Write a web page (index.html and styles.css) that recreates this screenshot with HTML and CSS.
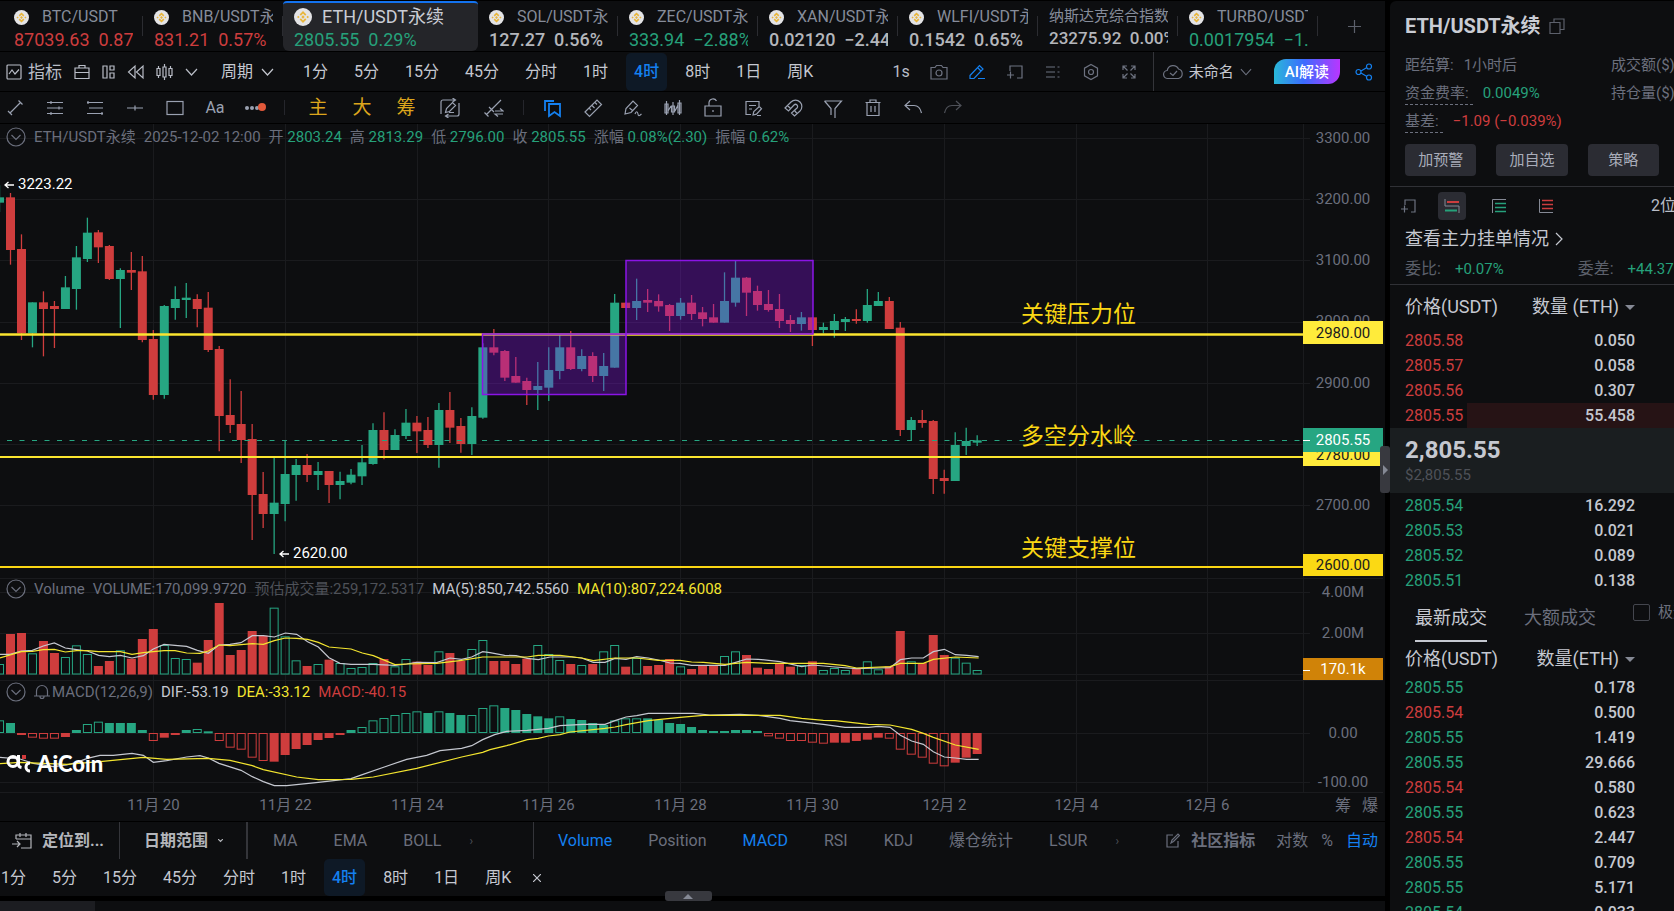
FILE: index.html
```html
<!DOCTYPE html>
<html lang="zh-CN">
<head>
    <meta charset="UTF-8">
    <meta name="viewport" content="width=device-width, initial-scale=1.0">
    <title>ETH/USDT永续 - AiCoin</title>
    <link rel="stylesheet" href="styles.css">
</head>
<body>
    <svg class="defs" width="0" height="0">
        <symbol id="coin" viewBox="0 0 18 18">
            <circle cx="9" cy="9" r="9" fill="#e4e4e6"/>
            <g fill="#e8b53a">
                <path d="M9 3l3.4 3.4-1.3 1.3L9 5.6 6.900 7.700 5.600 6.400z"/>
                <path d="M9 15l3.400-3.400-1.300-1.300L9 12.400l-2.100-2.100-1.300 1.300z"/>
                <path d="M9 7.300L10.700 9 9 10.700 7.300 9z"/>
                <path d="M4.300 7.700L5.600 9l-1.300 1.300L3 9zM13.700 7.700L15 9l-1.300 1.300L12.400 9z"/>
            </g>
        </symbol>
        <symbol id="chev" viewBox="0 0 13 8"><path d="M1 1l5.500 6L12 1"/></symbol>
        <symbol id="fold" viewBox="0 0 20 20"><circle cx="10" cy="10" r="9"/><path d="M5.500 8l4.500 4.500L14.500 8"/></symbol>
    </svg>

    <main class="main">
        <nav class="tabs">
            <button class="tab red"><span class="name"><svg><use href="#coin"/></svg>BTC/USDT</span><span class="price">87039.63&nbsp; 0.87%</span></button>
            <button class="tab red"><span class="name"><svg><use href="#coin"/></svg>BNB/USDT永续</span><span class="price">831.21&nbsp; 0.57%</span></button>
            <button class="tab green active"><span class="name"><svg><use href="#coin"/></svg>ETH/USDT永续</span><span class="price">2805.55&nbsp; 0.29%</span></button>
            <button class="tab flat"><span class="name"><svg><use href="#coin"/></svg>SOL/USDT永续</span><span class="price">127.27&nbsp; 0.56%</span></button>
            <button class="tab green"><span class="name"><svg><use href="#coin"/></svg>ZEC/USDT永续</span><span class="price">333.94&nbsp; −2.88%</span></button>
            <button class="tab flat"><span class="name"><svg><use href="#coin"/></svg>XAN/USDT永续</span><span class="price">0.02120&nbsp; −2.44%</span></button>
            <button class="tab flat"><span class="name"><svg><use href="#coin"/></svg>WLFI/USDT永续</span><span class="price">0.1542&nbsp; 0.65%</span></button>
            <button class="tab flat index"><span class="name">纳斯达克综合指数</span><span class="price">23275.92&nbsp; 0.00%</span></button>
            <button class="tab green"><span class="name"><svg><use href="#coin"/></svg>TURBO/USDT永续</span><span class="price">0.0017954&nbsp; −1.95%</span></button>
            <button class="add-tab" aria-label="add"><svg class="ico" width="13" height="13" viewBox="0 0 13 13"><path d="M6.500 0v13M0 6.500h13"/></svg></button>
        </nav>

        <div class="toolbar">
            <div class="tool-left">
                <button class="with-icon"><svg class="ico" width="16" height="16" viewBox="0 0 16 16"><rect x="1" y="1" width="14" height="14" rx="1"/><path d="M3 10l3-4 3 4 4-4.500"/></svg>指标</button>
                <button><svg class="ico" width="16" height="16" viewBox="0 0 16 16"><path d="M1 4h14v10.500H1zM1 8.500h14M5 4V1.500h6V4"/></svg></button>
                <button><svg class="ico" width="13" height="16" viewBox="0 0 13 16"><path d="M1 2h4v12H1zM8 2h4v4H8zM8 9h4v5H8z"/></svg></button>
                <button><svg class="ico" width="17" height="16" viewBox="0 0 17 16"><path d="M8 2v12L1.500 8zM16 2v12L9.500 8z"/></svg></button>
                <button><svg class="ico" width="17" height="16" viewBox="0 0 17 16"><path d="M1 4.500h3v7H1zM7 3h3v10H7zM13 4.500h3v7h-3zM2.500 2v2.500M2.500 11.500V14M8.500 0v3M8.500 13v3M14.500 2v2.500M14.500 11.500V14"/></svg></button>
                <button><svg class="ico" width="13" height="8"><use href="#chev"/></svg></button>
            </div>
            <div class="periods">
                <button class="pick">周期<svg class="ico" width="13" height="8"><use href="#chev"/></svg></button>
                <button>1分</button>
                <button>5分</button>
                <button>15分</button>
                <button>45分</button>
                <button>分时</button>
                <button>1时</button>
                <button class="on">4时</button>
                <button>8时</button>
                <button>1日</button>
                <button>周K</button>
            </div>
            <div class="tool-right">
                <button>1s</button>
                <button><svg class="ico" width="18" height="18" viewBox="0 0 18 18"><path d="M1 4.500h4l1.500-2h5l1.500 2h4V16H1z"/><circle cx="9" cy="10" r="3"/></svg></button>
                <button><svg class="ico blue" width="18" height="18" viewBox="0 0 18 18"><path d="M2 12.500L11.500 2.500l3.500 3.500L6 15.500H2zM9.500 4.500L13 8M10 15.500h7"/></svg></button>
                <button><svg class="ico" width="18" height="18" viewBox="0 0 18 18"><path d="M4 8V3h12v12h-5M1 12h7M4.500 8.500v7"/></svg></button>
                <button><svg class="ico" width="18" height="18" viewBox="0 0 18 18"><path d="M2 4h9M2 9h9M2 14h9M13.500 4h2M13.500 9h2M13.500 14h2"/></svg></button>
                <button><svg class="ico" width="18" height="18" viewBox="0 0 18 18"><path d="M9 1.500l6.500 3.700v7.600L9 16.500l-6.500-3.700V5.200z"/><circle cx="9" cy="9" r="2.500"/></svg></button>
                <button><svg class="ico" width="18" height="18" viewBox="0 0 18 18"><path d="M3 7V3h4M3 3l4.500 4.500M11 3h4v4M15 3l-4.500 4.500M3 11v4h4M3 15l4.500-4.500M15 11v4h-4M15 15l-4.500-4.500"/></svg></button>
            </div>
            <div class="layout-box">
                <button class="cloud"><svg class="ico" width="20" height="16" viewBox="0 0 20 16"><path d="M5 14.500a4 4 0 0 1-.8-8A6 6 0 0 1 15.500 5a4.900 4.900 0 0 1 0 9.500zM7 9l3 2.500L14 7"/></svg>未命名<svg class="ico" width="12" height="8"><use href="#chev"/></svg></button>
                <button class="ai">AI解读</button>
                <button><svg class="ico blue" width="18" height="18" viewBox="0 0 18 18"><circle cx="3.500" cy="9" r="2.500"/><circle cx="14" cy="3.500" r="2.500"/><circle cx="14" cy="14.500" r="2.500"/><path d="M6 8l5.500-3.200M6 10l5.500 3.200"/></svg></button>
            </div>
        </div>

        <div class="toolbar draw">
            <div class="draw-group">
                <button><svg class="ico" width="20" height="20" viewBox="0 0 20 20"><path d="M5 15L15.500 4.500M3 13l4 4M13.500 2.500l4 4"/></svg></button>
                <button><svg class="ico" width="20" height="20" viewBox="0 0 20 20"><path d="M2 4.500h16M2 10h16M2 15.500h16M6 3v3M14 8.500v3M6 14v3"/></svg></button>
                <button><svg class="ico" width="20" height="20" viewBox="0 0 20 20"><path d="M2 4.500h16M4 10h14M2 15.500h16M3 3v3M17 14v3"/></svg></button>
                <button><svg class="ico" width="20" height="20" viewBox="0 0 20 20"><path d="M2 10h16M10 7.500v5"/></svg></button>
                <button><svg class="ico" width="20" height="20" viewBox="0 0 20 20"><rect x="2" y="3.500" width="16" height="13"/></svg></button>
                <button class="aa">Aa</button>
                <button><svg class="dots" width="22" height="20" viewBox="0 0 22 20" fill="#9aa1b1"><circle cx="3" cy="10" r="2"/><circle cx="8" cy="10" r="2"/><circle cx="13" cy="10" r="2"/><circle cx="18" cy="9" r="4" fill="#e2593a"/></svg></button>
            </div>
            <span class="sep"></span>
            <div class="draw-group gold">
                <button>主</button>
                <button>大</button>
                <button>筹</button>
                <button><svg class="ico" width="20" height="20" viewBox="0 0 20 20"><path d="M1 16V4a2 2 0 0 1 2-2h12M12.500 0l3 2-3 2M19 5v11a2 2 0 0 1-2 2H6M8.500 16l-3 2 3 2M5.500 14.500l1-4 6-6 3 3-6 6zM9 14.500h5"/></svg></button>
                <button><svg class="ico" width="20" height="20" viewBox="0 0 20 20"><path d="M2.500 16.500L17 2M.5 14.500l4 4M5 9l5 5M11 13h8l-3-2.500M19 16h-8l3 2.500"/></svg></button>
            </div>
            <span class="sep"></span>
            <div class="draw-group">
                <button><svg class="ico blue bold" width="20" height="20" viewBox="0 0 20 20"><path d="M2 13V3h9M6 6h11v12l-5.500-4L6 18z"/></svg></button>
                <button><svg class="ico" width="20" height="20" viewBox="0 0 20 20"><path d="M2 14L14 2l4.500 4.500L6.500 18.500zM6 10l2 2M9 7.500l2.500 2.500M12 4.500l2 2"/></svg></button>
                <button><svg class="ico" width="20" height="20" viewBox="0 0 20 20"><path d="M2 16l1-5.500L10 3l4.500 4.500L8 14.500zM6.500 10l3 2.500M12 16c1-3 2.500-3 3 0s1.500 1.500 3.500 0"/></svg></button>
                <button><svg class="ico" width="20" height="20" viewBox="0 0 20 20"><path d="M2 6h3v9H2zM8.500 8h3v6h-3zM15 5h3v10h-3zM3.500 3v14M10 4v13M16.500 2v15M5 13l3-5M12 13l3-6"/></svg></button>
                <button><svg class="ico" width="20" height="20" viewBox="0 0 20 20"><path d="M2 8h16v10H2zM6 8V4.500a4 4 0 0 1 7.500-1.500M10 12v2"/></svg></button>
                <button><svg class="ico" width="20" height="20" viewBox="0 0 20 20"><path d="M8 16.500H3v-13h13v5M6 7.500h7M6 11h3M10 17l.8-3.500 5.500-5 2.200 2.200-5 5.500zM14 17.500h4"/></svg></button>
                <button><svg class="ico" width="20" height="20" viewBox="0 0 20 20"><path d="M2 10l6-6a6.200 6.200 0 0 1 9 9l-5.500 5-3-3 5.500-5a2 2 0 0 0-3-3l-5.500 6zM4.500 7.500l3 3M14 15.500l-2.500-3"/></svg></button>
                <button><svg class="ico" width="20" height="20" viewBox="0 0 20 20"><path d="M1.500 3h17L12 10.500V20M1.500 3L8 10.500V17"/></svg></button>
                <button><svg class="ico" width="20" height="20" viewBox="0 0 20 20"><path d="M2.500 4.500h15M7 4.500V2h6v2.500M4 4.500V17.500h12V4.500M8 8v6M12 8v6"/></svg></button>
                <button><svg class="ico" width="20" height="20" viewBox="0 0 20 20"><path d="M7 3L2 7.500 7 12M2 7.500h9c4 0 6.500 3 7.500 7.500"/></svg></button>
                <button><svg class="ico dim" width="20" height="20" viewBox="0 0 20 20"><path d="M13 3l5 4.500L13 12M18 7.500H9C5 7.500 2.500 10.500 1.500 15"/></svg></button>
            </div>
        </div>

        <section class="chart">
            <svg id="plot"></svg>
            <div class="legend ohlc">
                <svg class="ico" width="20" height="20"><use href="#fold"/></svg>
                <span>ETH/USDT永续</span>
                <span>2025-12-02 12:00</span>
                <span>开 <b>2803.24</b></span>
                <span>高 <b>2813.29</b></span>
                <span>低 <b>2796.00</b></span>
                <span>收 <b>2805.55</b></span>
                <span>涨幅 <b>0.08%(2.30)</b></span>
                <span>振幅 <b>0.62%</b></span>
            </div>
            <div class="legend vol">
                <svg class="ico" width="20" height="20"><use href="#fold"/></svg>
                <span>Volume</span>
                <span>VOLUME:170,099.9720</span>
                <span class="dim">预估成交量:259,172.5317</span>
                <span class="white">MA(5):850,742.5560</span>
                <span class="yellow">MA(10):807,224.6008</span>
            </div>
            <div class="legend macd">
                <svg class="ico" width="20" height="20"><use href="#fold"/></svg>
                <span class="bell"><svg class="ico" width="16" height="16" viewBox="0 0 16 16"><path d="M0 12h16M2.500 12V7a5.500 5.500 0 0 1 11 0v5M6 12.500a2 2 0 0 0 4 0"/></svg>MACD(12,26,9)</span>
                <span class="white">DIF:-53.19</span>
                <span class="yellow">DEA:-33.12</span>
                <span class="red">MACD:-40.15</span>
            </div>
            <div class="logo">
                <svg width="25" height="20" viewBox="0 0 25 20"><circle cx="7" cy="7.500" r="5" fill="none" stroke="#fff" stroke-width="3"/><path d="M12.500 1v9.500q0 2.500 3 3" fill="none" stroke="#fff" stroke-width="3"/><path d="M24 9a4 4 0 1 0 0 8" fill="none" stroke="#fff" stroke-width="3"/><rect x="16" y="1" width="4" height="4" fill="#d23a3c"/></svg>
                <span>AiCoin</span>
            </div>
            <button class="side-handle" aria-label="collapse panel"><svg width="5" height="10"><path d="M0 0l5 5-5 5z" fill="#858995"/></svg></button>
        </section>

        <div class="indicators">
            <button class="locate"><svg class="ico" width="20" height="18" viewBox="0 0 20 18"><path d="M4 7V3h15v13H9M4 7h15M8 1v4M14 1v4M0 12h8M5 9l3 3-3 3"/></svg>定位到...</button>
            <button class="range">日期范围<svg class="ico" width="5" height="4" viewBox="0 0 5 4"><path d="M0 0l2.500 2.500L5 0"/></svg></button>
            <div class="main-ind">
                <button>MA</button>
                <button>EMA</button>
                <button>BOLL</button>
                <button class="more">›</button>
            </div>
            <div class="sub-ind">
                <button class="on">Volume</button>
                <button>Position</button>
                <button class="on">MACD</button>
                <button>RSI</button>
                <button>KDJ</button>
                <button>爆仓统计</button>
                <button>LSUR</button>
                <button class="more">›</button>
            </div>
            <div class="scale">
                <button class="community"><svg class="ico" width="14" height="15" viewBox="0 0 14 15"><path d="M7 2H1v12h11V8M5 10l1-3 6-6 1.500 1.500-6 6z"/></svg>社区指标</button>
                <button>对数</button>
                <button>%</button>
                <button class="on">自动</button>
            </div>
        </div>

        <div class="periods bottom">
            <button>1分</button>
            <button>5分</button>
            <button>15分</button>
            <button>45分</button>
            <button>分时</button>
            <button>1时</button>
            <button class="on">4时</button>
            <button>8时</button>
            <button>1日</button>
            <button>周K</button>
            <button class="close" aria-label="close"><svg class="ico" width="8" height="8" viewBox="0 0 8 8"><path d="M0 0l8 8M8 0L0 8"/></svg></button>
        </div>

        <footer class="footer">
            <div class="foot-tab"></div>
            <button class="foot-handle" aria-label="expand"><svg width="10" height="5"><path d="M0 5l5-5 5 5z" fill="#858995"/></svg></button>
        </footer>
    </main>

    <aside class="side">
        <h1>ETH/USDT永续 <svg class="ico" width="16" height="16" viewBox="0 0 16 16"><path d="M1 4.500h10v11H1zM5 4.500V1h10v10.500h-4"/></svg></h1>
        <dl class="info">
            <div><dt>距结算:</dt><dd class="grey">1小时后</dd></div>
            <div><dt class="tip">资金费率:</dt><dd class="green">0.0049%</dd></div>
            <div><dt class="tip">基差:</dt><dd class="red">−1.09 (−0.039%)</dd></div>
        </dl>
        <div class="info-more"><span>成交额($)</span><span>持仓量($)</span></div>
        <div class="actions">
            <button>加预警</button>
            <button>加自选</button>
            <button>策略</button>
        </div>
        <div class="book-tools">
            <button class="add"><svg class="ico" width="16" height="16" viewBox="0 0 16 16"><path d="M4 7V2h10v12h-4M0 11h7M3.500 7.500v7"/></svg></button>
            <button class="on"><svg width="16" height="16" viewBox="0 0 16 16" fill="none"><path d="M1 1v7h14v7" stroke="#858995"/><path d="M3 4h12" stroke="#cd3d3e" stroke-width="2"/><path d="M1 12.500h12" stroke="#26a17b" stroke-width="2"/></svg></button>
            <button><svg width="16" height="16" viewBox="0 0 16 16" fill="none"><path d="M15 1.500H1.500V15" stroke="#858995"/><path d="M4 5.500h11M4 9.500h11M4 13.500h11" stroke="#26a17b" stroke-width="1.500"/></svg></button>
            <button><svg width="16" height="16" viewBox="0 0 16 16" fill="none"><path d="M1.500 1v13.500H15" stroke="#858995"/><path d="M4 2.500h11M4 6.500h11M4 10.500h11" stroke="#cd3d3e" stroke-width="1.500"/></svg></button>
            <span>2位</span>
        </div>
        <a class="big-orders" href="#">查看主力挂单情况 <svg class="ico" width="8" height="14" viewBox="0 0 8 14"><path d="M1 1l6 6-6 6"/></svg></a>
        <div class="ratio"><span>委比:</span><em>+0.07%</em><span class="diff">委差:</span><em>+44.37</em></div>

        <table class="book asks">
            <thead><tr><th>价格(USDT)</th><th>数量 (ETH)<i></i></th></tr></thead>
            <tbody>
                <tr><td class="red">2805.58</td><td>0.050</td></tr>
                <tr><td class="red">2805.57</td><td>0.058</td></tr>
                <tr><td class="red">2805.56</td><td>0.307</td></tr>
                <tr class="depth" style="background-size: 73% 100%"><td class="red">2805.55</td><td>55.458</td></tr>
            </tbody>
        </table>
        <div class="last"><strong>2,805.55</strong><span>$2,805.55</span></div>
        <table class="book">
            <tbody>
                <tr><td class="green">2805.54</td><td>16.292</td></tr>
                <tr><td class="green">2805.53</td><td>0.021</td></tr>
                <tr><td class="green">2805.52</td><td>0.089</td></tr>
                <tr><td class="green">2805.51</td><td>0.138</td></tr>
            </tbody>
        </table>
        <div class="trade-tabs">
            <button class="on">最新成交</button>
            <button>大额成交</button>
            <label><input type="checkbox">极速</label>
        </div>
        <table class="book trades">
            <thead><tr><th>价格(USDT)</th><th>数量(ETH)<i></i></th></tr></thead>
            <tbody>
                <tr><td class="green">2805.55</td><td>0.178</td></tr>
                <tr><td class="red">2805.54</td><td>0.500</td></tr>
                <tr><td class="green">2805.55</td><td>1.419</td></tr>
                <tr><td class="green">2805.55</td><td>29.666</td></tr>
                <tr><td class="red">2805.54</td><td>0.580</td></tr>
                <tr><td class="green">2805.55</td><td>0.623</td></tr>
                <tr><td class="red">2805.54</td><td>2.447</td></tr>
                <tr><td class="green">2805.55</td><td>0.709</td></tr>
                <tr><td class="green">2805.55</td><td>5.171</td></tr>
                <tr><td class="green">2805.54</td><td>0.033</td></tr>
            </tbody>
        </table>
    </aside>

    <script src="chart.js"></script>
</body>
</html>
```

FILE: styles.css
```css
* {
    box-sizing: border-box;
}
body {
    margin: 0;
    height: 100vh;
    display: flex;
    gap: 5px;
    overflow: hidden;
    background: #000;
    color: #c5c8d0;
    font-family: Roboto, "Noto Sans CJK SC", sans-serif;
    font-size: 16px;
    line-height: 20px;
    white-space: nowrap;
}
button {
    font: inherit;
    color: inherit;
    background: none;
    border: 0;
    padding: 0;
    cursor: pointer;
    display: flex;
    align-items: center;
}
.defs {
    position: absolute;
}
.ico {
    fill: none;
    stroke: currentColor;
    stroke-width: 1.2;
    flex: none;
}
.blue {
    color: #1480f0;
}
.bold {
    stroke-width: 1.8;
}
.red {
    color: #cd3d3e;
}
.green {
    color: #26a17b;
}
.main {
    flex: 1;
    min-width: 0;
    display: flex;
    flex-direction: column;
}

/* symbol tabs */
.tabs {
    display: flex;
    height: 52px;
    padding-left: 3px;
    background: #0d0e10;
    border-top: 1px solid #000;
    border-bottom: 1px solid #000;
}
.tab {
    position: relative;
    flex: 0 0 140px;
    min-width: 0;
    flex-direction: column;
    align-items: stretch;
    padding: 5px 10px 0 11px;
    text-align: left;
}
.tab::after {
    content: "";
    position: absolute;
    right: 0;
    top: 15px;
    width: 1px;
    height: 20px;
    background: #2b2c31;
}
.tab .name {
    display: flex;
    align-items: center;
    gap: 13px;
    height: 23px;
    overflow: hidden;
    color: #868c9a;
}
.tab .name svg {
    width: 15px;
    height: 15px;
    flex: none;
}
.tab .price {
    height: 24px;
    line-height: 24px;
    overflow: hidden;
    font-size: 18px;
}
.tab.flat .price {
    color: #b4b6bb;
    font-weight: 500;
}
.tab.index .name {
    font-size: 15px;
    height: 20px;
}
.tab.index .price {
    font-size: 17px;
}
.tab.active {
    flex-basis: 195px;
    padding-top: 3px;
    background: #242529;
    border-top: 2px solid #1373f0;
    border-radius: 4px 4px 6px 6px;
}
.tab.active::after {
    display: none;
}
.tab.active .name {
    gap: 10px;
    font-size: 18px;
    color: #c9ccd4;
}
.tab.active .name svg {
    width: 18px;
    height: 18px;
}
.add-tab {
    margin-left: auto;
    padding-right: 24px;
    color: #5c606b;
}

/* toolbars */
.toolbar {
    display: flex;
    align-items: center;
    height: 40px;
    padding-left: 6px;
    background: #0d0e10;
    border-bottom: 1px solid #000;
}
.tool-left {
    display: flex;
    align-items: center;
    gap: 12px;
    color: #b9bdc7;
}
.with-icon {
    gap: 6px;
    font-size: 17px;
}
.periods {
    display: flex;
    align-items: center;
    gap: 10px;
    margin-left: 15px;
}
.periods button {
    height: 38px;
    padding: 0 8px;
    border-radius: 5px;
}
.periods .pick {
    gap: 8px;
    margin-right: 3px;
}
.periods .on {
    background: #0e1926;
    color: #1480f0;
    font-weight: 500;
}
.tool-right {
    display: flex;
    align-items: center;
    gap: 20px;
    margin-left: auto;
    padding-right: 15px;
    color: #6d7280;
}
.tool-right button:first-child {
    color: #b9bdc7;
}
.layout-box {
    display: flex;
    align-items: center;
    height: 39px;
    padding: 0 12px 0 9px;
    border-left: 1px solid #34353a;
}
.cloud {
    gap: 6px;
    font-size: 15px;
    margin-right: 22px;
}
.cloud .ico {
    color: #6d7280;
}
.ai {
    height: 25px;
    padding: 0 11px;
    margin-right: 15px;
    border-radius: 12px 0 12px 0;
    background: linear-gradient(90deg, #29b8d8, #3b6bff 45%, #b936ff);
    color: #fff;
    font-size: 15px;
    font-weight: 500;
}
.draw {
    height: 32px;
    padding-left: 5px;
    color: #9aa1b1;
}
.draw-group {
    display: flex;
    gap: 20px;
}
.draw-group button {
    width: 20px;
    height: 31px;
    justify-content: center;
}
.dots {
    flex: none;
}
.sep {
    width: 1px;
    height: 15px;
    margin: 0 19px;
    background: #25262c;
}
.gold {
    gap: 24px;
    margin-left: 4px;
}
.gold button {
    color: #dca51c;
    font-size: 19px;
}
.gold button .ico {
    color: #9aa1b1;
}
.dim {
    color: #4e5158;
}

/* chart */
.chart {
    position: relative;
    flex: 1;
    min-height: 0;
    background: #0d0e10;
}
#plot {
    display: block;
    width: 100%;
    height: 100%;
    font-size: 15px;
}
.legend {
    position: absolute;
    left: 6px;
    display: flex;
    align-items: center;
    gap: 8px;
    height: 20px;
    font-size: 15px;
    color: #6b6f7d;
}
.legend b {
    font-weight: 400;
    color: #26a17b;
}
.legend .white {
    color: #c5c8d0;
}
.legend .yellow {
    color: #f3e52f;
}
.legend .red {
    color: #cd3d3e;
}
.legend .dim {
    color: #4e5158;
}
.ohlc {
    top: 3px;
}
.vol {
    top: 455px;
}
.macd {
    top: 558px;
}
.bell {
    display: flex;
    align-items: center;
    gap: 2px;
}
.logo {
    position: absolute;
    left: 6px;
    top: 630px;
    display: flex;
    align-items: center;
    gap: 6px;
    color: #fff;
    font-family: Lato, sans-serif;
    font-size: 22px;
    font-weight: 900;
}
.side-handle {
    position: absolute;
    right: -5px;
    top: 322px;
    width: 10px;
    height: 47px;
    padding-left: 3px;
    border-radius: 3px;
    background: #38393f;
}

/* bottom rows */
.indicators {
    display: flex;
    align-items: center;
    height: 38px;
    background: #0d0e10;
    border-top: 1px solid #000;
    color: #6b6f7d;
}
.indicators > * {
    height: 37px;
}
.indicators .on {
    color: #1480f0;
}
.locate,
.range {
    gap: 10px;
    font-weight: 700;
    color: #b4b6bb;
}
.locate {
    width: 120px;
    padding-left: 12px;
    border-right: 1px solid #34353a;
}
.range {
    width: 128px;
    padding-left: 24px;
    border-right: 2px solid #34353a;
}
.main-ind,
.sub-ind,
.scale {
    display: flex;
    align-items: center;
    gap: 36px;
}
.main-ind {
    width: 286px;
    padding-left: 25px;
    border-right: 1px solid #34353a;
}
.indicators .more {
    margin-left: -8px;
    font-size: 12px;
    color: #4e5158;
}
.sub-ind {
    padding-left: 24px;
}
.scale {
    gap: 13px;
    margin-left: auto;
    padding-right: 7px;
}
.community {
    gap: 11px;
    margin-right: 8px;
    font-weight: 700;
}
.bottom {
    height: 37px;
    margin: 0;
    background: #0d0e10;
}
.bottom button {
    height: 37px;
}
.bottom button:first-child {
    padding-left: 1px;
}
.bottom .close {
    padding-left: 4px;
}
.footer {
    position: relative;
    height: 15px;
    border-top: 5px solid #000;
    background: #0d0e10;
}
.foot-tab {
    width: 95px;
    height: 10px;
    background: #1c1d21;
}
.foot-handle {
    position: absolute;
    left: 48%;
    top: -10px;
    width: 47px;
    height: 10px;
    justify-content: center;
    border-radius: 3px;
    background: #38393f;
}

/* side panel */
.side {
    position: relative;
    flex: 0 0 284px;
    margin-top: 1px;
    overflow: hidden;
    background: #0d0e10;
    border-radius: 6px 0 0 0;
}
.side h1 {
    display: flex;
    align-items: center;
    gap: 8px;
    height: 50px;
    margin: 0;
    padding-left: 15px;
    font-size: 20px;
    font-weight: 700;
    color: #c9ccd4;
}
.side h1 .ico {
    color: #5c606b;
}
.info {
    margin: 0;
    padding-left: 15px;
    font-size: 15px;
}
.info div {
    display: flex;
    align-items: center;
    gap: 10px;
    height: 28px;
}
.info dt {
    line-height: 22px;
    color: #6b6f7d;
    border-bottom: 1px solid transparent;
}
.info .tip {
    border-bottom: 1px dashed #6b6f7d;
    padding-right: 4px;
}
.info dd {
    margin: 0;
}
.grey {
    color: #6b6f7d;
}
.info-more {
    position: absolute;
    left: 221px;
    top: 50px;
    display: flex;
    flex-direction: column;
    font-size: 15px;
    line-height: 28px;
    color: #6b6f7d;
}
.actions {
    display: flex;
    gap: 20px;
    padding: 9px 15px 10px;
    border-bottom: 1px solid #303136;
}
.actions button {
    flex: 1;
    height: 32px;
    justify-content: center;
    border-radius: 4px;
    background: #2b2c33;
    color: #a9adba;
    font-size: 15px;
}
.book-tools {
    display: flex;
    align-items: center;
    gap: 19px;
    height: 37px;
    padding-left: 9px;
    color: #6d7280;
}
.book-tools button {
    flex: none;
    width: 28px;
    height: 28px;
    justify-content: center;
    border-radius: 4px;
}
.book-tools .add {
    width: 20px;
}
.book-tools .on {
    background: #2b2c33;
}
.book-tools span {
    margin-left: 72px;
    color: #b9bdc7;
}
.big-orders {
    display: flex;
    align-items: center;
    gap: 6px;
    height: 30px;
    padding-left: 15px;
    font-size: 18px;
    color: #c5c8d0;
    text-decoration: none;
}
.ratio {
    display: flex;
    align-items: center;
    height: 31px;
    padding-left: 15px;
    color: #5c606b;
    border-bottom: 1px solid #303136;
}
.ratio em {
    margin-left: 14px;
    font-size: 15px;
    font-style: normal;
    color: #26a17b;
}
.ratio .diff {
    margin-left: 74px;
}
.book {
    width: 100%;
    border-collapse: collapse;
    line-height: 25px;
}
.book th {
    height: 33px;
    font-size: 18px;
    font-weight: 400;
    text-align: left;
}
.asks th {
    height: 43px;
}
.book td,
.book th {
    padding: 0 0 0 15px;
}
.book td:last-child,
.book th:last-child {
    padding: 0 39px 0 0;
    text-align: right;
}
.book td:last-child {
    font-weight: 500;
}
.book th i {
    display: inline-block;
    margin: 0 0 3px 6px;
    border: 5px solid transparent;
    border-top-color: #858995;
    border-bottom: 0;
}
.depth {
    background: linear-gradient(#261315, #261315) right / 0 100% no-repeat;
}
.last {
    height: 65px;
    padding: 7px 15px;
    background: #1a1e20;
}
.last strong {
    display: block;
    font-size: 24px;
    line-height: 30px;
}
.last span {
    font-size: 15px;
    line-height: 21px;
    color: #4e5158;
}
.trade-tabs {
    display: flex;
    height: 49px;
    padding-left: 25px;
    font-size: 18px;
    color: #6b6f7d;
}
.trade-tabs button {
    margin-right: 37px;
    border-top: 2px solid transparent;
    border-bottom: 2px solid transparent;
}
.trade-tabs .on {
    color: #c5c8d0;
    border-bottom-color: #c5c8d0;
}
.trade-tabs label {
    display: flex;
    align-items: center;
    gap: 8px;
    height: 38px;
    font-size: 15px;
}
.trade-tabs input {
    appearance: none;
    flex: none;
    width: 17px;
    height: 17px;
    margin: 0;
    border: 1px solid #44464e;
    border-radius: 2px;
}
```

FILE: chart.js
```js
const UP = '#26a682', DOWN = '#cf3d3d', GRID = '#1a1b1e', LABEL = '#6b6f7d';
const STEP = 10.985, FIRST = 10.5, BAR = 9;
const AXIS = 82; // price axis width

// side, body top, body bottom, high, low (3 units per pixel)
const candles = [
    'g 232 248 196 276', 'r 232 390 219 434', 'r 387 640 343 660', 'g 547 640 547 682', 'r 547 567 514 709',
    'r 558 567 543 684', 'g 502 567 468 567', 'g 412 507 378 569', 'g 338 417 293 426', 'r 337 382 330 429',
    'r 378 477 375 480', 'g 450 477 445 624', 'r 450 458 396 510', 'r 454 660 408 667', 'r 657 825 630 839',
    'g 558 825 555 836', 'g 537 564 499 599', 'g 533 540 489 594', 'r 537 567 523 622', 'r 563 690 516 696',
    'r 687 888 678 994', 'r 885 915 778 939', 'r 912 960 813 1029', 'r 957 1125 912 1260', 'r 1122 1182 1056 1224',
    'g 1148 1182 1014 1302', 'g 1062 1152 962 1204', 'g 1035 1065 1017 1142', 'r 1035 1065 1002 1086', 'g 1053 1065 1026 1110',
    'r 1053 1095 1053 1149', 'g 1083 1095 1055 1138', 'g 1064 1088 1047 1093', 'g 1027 1069 975 1095', 'g 930 1032 910 1034',
    'r 930 990 877 1018', 'g 945 990 928 990', 'g 908 948 867 957', 'r 908 934 888 999', 'r 930 975 891 984',
    'g 870 975 849 1043', 'r 870 923 816 969', 'r 918 972 894 998', 'g 888 972 862 1005', 'g 682 893 670 896',
    'r 682 698 627 706', 'r 693 773 690 783', 'r 768 788 711 788', 'r 783 810 773 855', 'g 798 810 726 870',
    'g 750 803 682 843', 'g 682 753 645 778', 'r 682 747 633 750', 'g 708 747 688 754', 'r 708 768 697 786',
    'g 738 768 699 813', 'g 548 743 522 743', 'r 548 564 548 564', 'g 543 564 476 600', 'r 540 548 507 576',
    'r 543 559 523 575', 'r 555 588 552 633', 'g 548 588 534 599', 'r 548 582 525 600', 'r 577 597 561 619',
    'r 592 608 552 608', 'g 543 608 457 608', 'g 473 548 423 560', 'r 473 518 471 588', 'r 513 555 497 572',
    'r 552 570 510 575', 'r 567 603 522 624', 'r 600 612 585 636', 'g 592 612 576 632', 'r 592 630 592 678',
    'g 621 630 608 640', 'g 603 630 582 653', 'g 597 606 591 633', 'r 597 603 568 611', 'g 555 603 507 608',
    'g 543 558 516 558', 'r 543 627 531 627', 'r 623 930 606 948', 'g 900 930 891 962', 'r 900 909 870 923',
    'r 903 1077 900 1122', 'r 1074 1083 1049 1121', 'g 975 1083 937 1083', 'g 963 978 923 1005', 'g 961 968 946 978'
];

const volume = [
    267, 177, 174, 235, 198, 234, 246, 211, 237, 273, 258, 226, 251, 192, 162, 210, 249, 252, 263, 195,
    84, 240, 225, 168, 182, 98, 184, 256, 273, 267, 254, 264, 279, 276, 264, 252, 274, 252, 260, 270,
    229, 234, 258, 222, 195, 258, 258, 267, 251, 210, 237, 255, 267, 270, 267, 229, 210, 275, 249, 273,
    270, 252, 274, 282, 272, 273, 243, 229, 240, 278, 282, 266, 275, 270, 259, 285, 279, 285, 281, 259,
    283, 274, 168, 259, 264, 180, 240, 248, 263, 285
];

// h = hollow bar, f = filled bar
const macd = ('436h 444f 480f 488h 491h 491h 486f 465f 447h 440h 444f 444f 444f 465f 498h 488f 480f 465f 462h 469f ' +
    '498h 518h 524h 548h 558h 560f 540f 522f 510f 495f 489f 480f 465f 456h 436h 429h 420h 414h 409h 414f ' +
    '409h 414f 420f 420h 399h 391h 399f 405f 417f 424f 430f 424h 432f 435f 444f 450f 436h 430h 430h 430f ' +
    '435f 444f 447f 456f 465f 468f 468f 465f 465f 468f 484h 491h 498h 498h 503h 506h 503f 503f 498f 494f ' +
    '488f 491h 524h 539h 548h 566h 574h 563f 548f 537f').split(' ');

const lines = {
    ma5: '0,238 30,238 64,228 97,226 130,213 163,204 196,219 230,224 262,228 296,241 328,245 361,241 396,249 430,242 460,222 492,208 525,211 560,214 592,226 625,235 657,210 690,208 723,203 757,182 790,182 823,186 856,174 890,178 923,200 955,216 987,248 1020,265 1053,268 1120,268 1185,271 1220,267 1250,262 1310,263 1350,249 1385,253 1415,246 1448,230 1470,233 1514,241 1548,242 1582,250 1615,254 1650,246 1715,246 1745,249 1780,262 1815,262 1845,250 1878,253 1910,245 1945,249 1975,255 2010,264 2040,265 2075,271 2175,271 2207,262 2240,252 2275,253 2340,260 2405,275 2437,270 2505,276 2570,281 2635,279 2670,278 2701,254 2735,249 2770,249 2800,230 2833,223 2866,239 2900,241 2936,245',
    ma10: '0,249 64,230 97,229 130,224 163,223 196,231 230,227 262,227 296,230 361,230 396,238 430,233 460,230 492,227 525,227 560,234 600,235 625,228 657,210 690,212 757,206 790,208 823,197 856,189 890,190 923,193 955,202 987,216 1020,219 1053,222 1087,234 1120,242 1185,269 1220,267 1310,265 1385,256 1448,246 1582,246 1615,241 1680,241 1745,249 1780,257 1845,249 1910,249 1975,256 2040,256 2075,261 2110,262 2175,268 2240,262 2305,265 2470,265 2535,272 2570,279 2670,275 2701,265 2770,265 2800,253 2866,246 2936,249',
    dif: '0,547 60,552 100,565 160,575 200,570 230,562 262,550 300,541 340,541 396,535 430,541 460,562 500,557 560,546 600,542 625,549 657,565 723,586 757,605 790,620 823,632 860,632 955,622 1053,611 1087,599 1153,576 1220,553 1280,541 1320,527 1385,520 1415,512 1448,494 1484,479 1520,469 1582,466 1645,460 1680,452 1750,448 1815,448 1845,437 1878,426 1910,422 1945,415 2080,415 2130,420 2220,418 2275,421 2340,430 2370,437 2470,448 2535,457 2605,457 2635,454 2670,457 2701,481 2735,498 2770,508 2800,530 2833,546 2866,549 2900,553 2936,553',
    dea: '0,566 60,562 200,568 300,560 430,547 500,553 625,550 690,556 757,572 790,584 890,606 955,614 1053,613 1120,606 1250,580 1385,546 1448,532 1470,524 1520,512 1582,494 1615,490 1645,483 1680,479 1710,471 1815,460 1845,456 1878,449 1945,437 2040,427 2110,421 2340,421 2405,430 2470,436 2505,437 2605,448 2670,450 2735,463 2770,475 2800,487 2866,510 2936,523'
};

const py = v => v / 3 - 4;     // price pane
const sy = v => v / 3 + 451;   // volume and macd panes
const rect = (x, y, w, h, attrs) => `<rect x="${x}" y="${y}" width="${w}" height="${h}" ${attrs}/>`;
const line = (x1, y1, x2, y2, attrs) => `<path d="M${x1} ${y1}L${x2} ${y2}" fill="none" ${attrs}/>`;
const text = (x, y, s, attrs) => `<text x="${x}" y="${y}" ${attrs}>${s}</text>`;
const poly = (pts, color) => `<polyline fill="none" stroke="${color}" stroke-width="1.2" points="` +
    pts.split(' ').map(p => { const [x, y] = p.split(','); return x / 3 + ',' + sy(+y); }).join(' ') + '"/>';

function bar(x, top, bottom, color, filled) {
    const h = Math.max(bottom - top, 2);
    return filled ? rect(x - BAR / 2, top, BAR, h, `fill="${color}"`)
        : rect(x - BAR / 2 + 0.5, top + 0.5, BAR - 1, Math.max(h - 1, 1), `fill="none" stroke="${color}"`);
}

function draw() {
    const svg = document.getElementById('plot');
    const W = svg.clientWidth, right = W - AXIS, mid = W - 42;
    let s = '';

    // grid
    const grid = `stroke="${GRID}"`;
    [14, 75, 136, 198, 259, 320, 381, 468, 509, 550, 609, 658].forEach(y => s += line(0, y + 0.5, right + 7, y + 0.5, grid));
    [454, 556, 668].forEach(y => s += line(0, y + 0.5, W - 2, y + 0.5, grid));
    const dates = ['11月 20', '11月 22', '11月 24', '11月 26', '11月 28', '11月 30', '12月 2', '12月 4', '12月 6'];
    dates.forEach((d, i) => {
        const x = Math.round(153 + i * 131.8) + 0.5;
        s += line(x, 0, x, 668, grid) + text(x, 686, d, `fill="${LABEL}" text-anchor="middle"`);
    });
    s += line(right + 0.5, 0, right + 0.5, 668, grid);
    s += text(W - 34, 687, '筹', `fill="${LABEL}" font-size="16" text-anchor="end"`);
    s += text(W - 7, 687, '爆', `fill="${LABEL}" font-size="16" text-anchor="end"`);

    // axis labels
    [3300, 3200, 3100, 3000, 2900, 2700].forEach(p => {
        s += text(mid, Math.round(18.5 + (3300 - p) * 0.6125), p.toFixed(2), `fill="${LABEL}" text-anchor="middle"`);
    });
    [['4.00M', 473], ['2.00M', 514], ['0.00', 614], ['-100.00', 663]].forEach(([t, y]) => {
        s += text(mid, y, t, `fill="${LABEL}" text-anchor="middle"`);
    });

    // candles
    candles.forEach((row, i) => {
        const [side, top, bottom, high, low] = row.split(' ');
        const x = FIRST + (i - 1) * STEP, color = side === 'g' ? UP : DOWN;
        s += line(x, py(high), x, py(low), `stroke="${color}" stroke-width="1.3"`);
        s += bar(x, py(top), py(bottom), color, true);
        s += bar(x, sy(volume[i]), 550.5, color, side === 'r');
        const v = parseInt(macd[i]), up = v < 474;
        s += bar(x, sy(up ? v : 474), sy(up ? 474 : v), up ? UP : DOWN, macd[i].endsWith('f'));
    });
    s += poly(lines.ma5, '#c5c8d0') + poly(lines.ma10, '#f3e52f');
    s += poly(lines.dif, '#c5c8d0') + poly(lines.dea, '#f3e52f');

    // key levels and ranges
    s += line(7, 316.5, right, 316.5, `stroke="${UP}" stroke-dasharray="5 7.500"`);
    s += line(0, 210.5, right, 210.5, 'stroke="#fbe52f" stroke-width="2.500"');
    s += line(0, 333, right, 333, 'stroke="#fbe52f" stroke-width="2"');
    s += line(0, 443, right, 443, 'stroke="#fad714" stroke-width="2"');
    const box = 'fill="#8d14f1" fill-opacity="0.32" stroke="#8b14e6" stroke-width="1.500"';
    s += rect(482.5, 210, 143.5, 60.5, box) + rect(626, 136.5, 187, 73.5, box);
    [['关键压力位', 198], ['多空分水岭', 320], ['关键支撑位', 432]].forEach(([t, y]) => {
        s += text(1021, y, t, 'fill="#fad714" font-size="23"');
    });

    // high / low marks
    [[4, 65, '3223.22'], [279, 434, '2620.00']].forEach(([x, y, t]) => {
        s += `<path d="M${x + 10} ${y - 4}h-9m3.500-3l-3.500 3 3.500 3" fill="none" stroke="#fff" stroke-width="1.300"/>`;
        s += text(x + 14, y, t, 'fill="#fff"');
    });

    // price tags
    const tag = (y, h, fill, color, t) => rect(right, y, 80, h, `fill="${fill}"`) + text(mid, y + Math.round(h / 2) + 5, t, `fill="${color}" text-anchor="middle"`);
    s += tag(197, 23, '#ffeb3b', '#1a1b1e', '2980.00');
    s += tag(319, 23, '#ffeb3b', '#1a1b1e', '2780.00');
    s += tag(304, 24, UP, '#fff', '2805.55');
    s += tag(430, 22, '#fbd914', '#1a1b1e', '2600.00');
    s += tag(534, 22, '#d08308', '#fff', '170.1k');
    s += line(right, 316.5, right + 7, 316.5, 'stroke="#fff"') + line(right, 546.5, right + 7, 546.5, 'stroke="#fff"');

    svg.innerHTML = s;
}

draw();
window.addEventListener('resize', draw);
```
